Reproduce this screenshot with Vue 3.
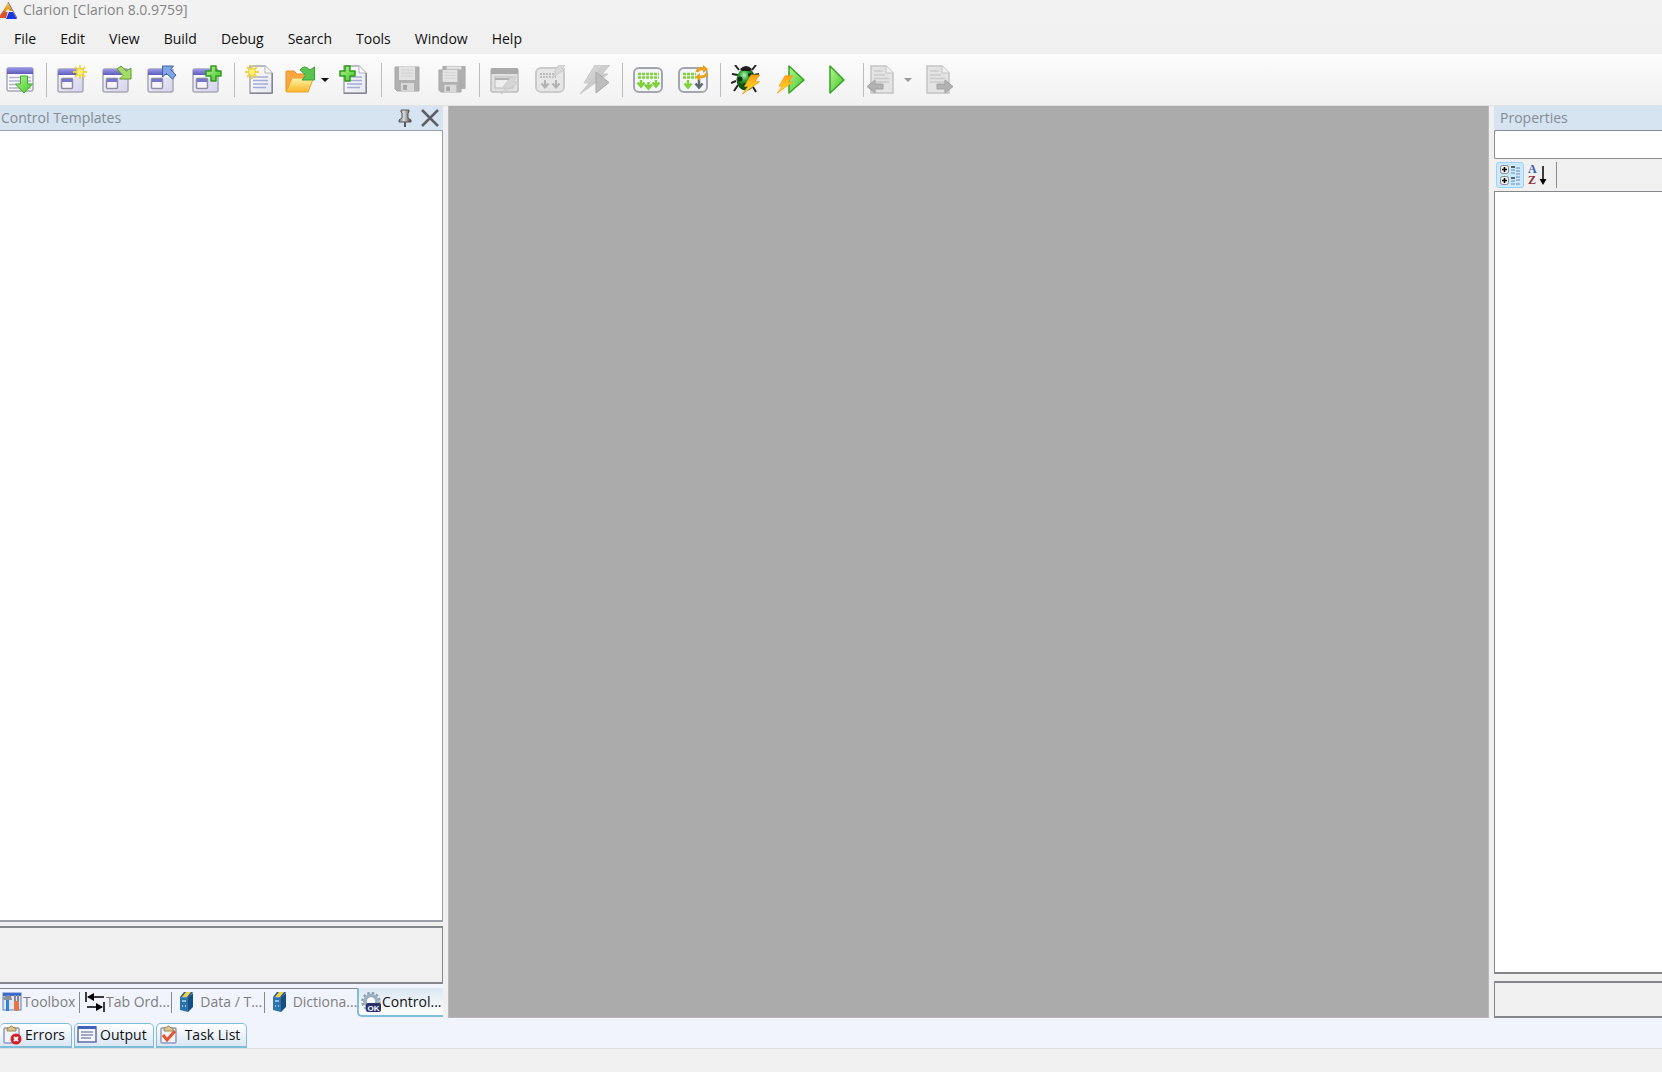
<script setup>
const menus = ['File', 'Edit', 'View', 'Build', 'Debug', 'Search', 'Tools', 'Window', 'Help']

const tools = [
  { id: 'pick', label: 'Application pick list' },
  { sep: true },
  { id: 'win-new', label: 'New solution' },
  { id: 'win-open', label: 'Open solution' },
  { id: 'win-import', label: 'Import solution' },
  { id: 'win-add', label: 'Add project' },
  { sep: true },
  { id: 'file-new', label: 'New file' },
  { id: 'folder', label: 'Open file', caret: true },
  { id: 'file-add', label: 'Add file' },
  { sep: true },
  { id: 'save', label: 'Save', disabled: true },
  { id: 'save-all', label: 'Save all', disabled: true },
  { sep: true },
  { id: 'win-gen', label: 'Generate window', disabled: true },
  { id: 'grid-gen', label: 'Generate all', disabled: true },
  { id: 'gen-run', label: 'Generate and run', disabled: true },
  { sep: true },
  { id: 'build', label: 'Build solution' },
  { id: 'rebuild', label: 'Rebuild solution' },
  { sep: true },
  { id: 'bug', label: 'Debug' },
  { id: 'bolt-run', label: 'Build and run' },
  { id: 'run', label: 'Run' },
  { sep: true },
  { id: 'back', label: 'Navigate back', disabled: true, caret: true, slim: true },
  { id: 'forward', label: 'Navigate forward', disabled: true },
]

const padTabs = [
  { id: 'toolbox', label: 'Toolbox' },
  { id: 'taborder', label: 'Tab Ord...', inset: true },
  { id: 'book', label: 'Data / T...', roomy: true },
  { id: 'book', label: 'Dictiona...', roomy: true },
  { id: 'gear', label: 'Control...', active: true },
]

const dockTabs = [
  { id: 'errors', label: 'Errors' },
  { id: 'output', label: 'Output' },
  { id: 'tasks', label: 'Task List', roomy: true },
]
</script>

<template>
  <div class="shell">
    <svg class="defs" aria-hidden="true">
      <defs>
        <linearGradient id="gBlue" x2="0" y2="1"><stop offset="0" stop-color="#9c99ea" /><stop offset="1" stop-color="#5d5bb8" /></linearGradient>
        <linearGradient id="gPane" x2="1" y2="1"><stop offset="0" stop-color="#f7f7ff" /><stop offset="1" stop-color="#d4d2ee" /></linearGradient>
        <linearGradient id="gGreen" x2="1" y2="1"><stop offset="0" stop-color="#b8f29b" /><stop offset="1" stop-color="#3fc81e" /></linearGradient>
        <linearGradient id="gPaper" x2="1" y2="1"><stop offset="0" stop-color="#ffffff" /><stop offset="1" stop-color="#e4e6ee" /></linearGradient>
        <linearGradient id="gFold" x2="0" y2="1"><stop offset="0" stop-color="#fff3a6" /><stop offset="1" stop-color="#f9b72c" /></linearGradient>
        <linearGradient id="gBolt" x2="0" y2="1"><stop offset="0" stop-color="#ffa012" /><stop offset="1" stop-color="#ffe52e" /></linearGradient>
        <linearGradient id="gGrey" x2="1" y2="1"><stop offset="0" stop-color="#e2e2e2" /><stop offset="1" stop-color="#b4b4b4" /></linearGradient>
        <linearGradient id="gPin"><stop offset="0" stop-color="#777" /><stop offset=".4" stop-color="#ddd" /><stop offset="1" stop-color="#444" /></linearGradient>
        <radialGradient id="gBug" cx=".4" cy=".3"><stop offset="0" stop-color="#b5f2b5" /><stop offset=".5" stop-color="#2fa53a" /><stop offset="1" stop-color="#07520f" /></radialGradient>
        <linearGradient id="gLogo" x2="0" y2="1"><stop offset="0" stop-color="#ffd15a" /><stop offset="1" stop-color="#e08a10" /></linearGradient>
      </defs>

      <symbol id="win" viewBox="0 0 30 30">
        <rect x="1" y="4" width="25" height="23" rx="2" fill="url(#gPane)" stroke="#a8a8b4" stroke-width="1.5" />
        <path d="M1 10V6Q1 4 3 4H24Q26 4 26 6V10Z" fill="url(#gBlue)" />
        <rect x="2" y="10" width="23" height="2" fill="#fff" />
        <rect x="4.500" y="13.500" width="11" height="10" rx="1" fill="#f6f5ff" stroke="#8e8ea0" stroke-width="1.500" />
        <rect x="5" y="14" width="10" height="3" fill="#7875cd" />
      </symbol>
      <symbol id="star" viewBox="0 0 14 14">
        <path d="M7 0V14M0 7H14M2 2L12 12M12 2L2 12" stroke="#f4d43c" stroke-width="1.800" />
        <circle cx="7" cy="7" r="3.500" fill="#fff176" stroke="#efcb35" />
      </symbol>
      <symbol id="plus" viewBox="0 0 17 17">
        <path d="M6 1H11V6H16V11H11V16H6V11H1V6H6Z" fill="url(#gGreen)" stroke="#2f9a1c" stroke-width="1.500" stroke-linejoin="round" />
      </symbol>
      <symbol id="sheet" viewBox="0 0 24 29">
        <path d="M1 1H16L23 8V28H1Z" fill="url(#gPaper)" stroke="#a6a8b0" stroke-width="1.500" />
        <path d="M16 1V8H23" fill="#fff" stroke="#b0b2ba" />
        <path d="M4 12H19M4 15.500H19M4 19H19M4 22.500H17" stroke="#a3acd6" stroke-width="1.300" />
        <path d="M23.300 8V28.300H1" fill="none" stroke="#777984" />
      </symbol>
      <symbol id="greysheet" viewBox="0 0 24 29">
        <path d="M1 1H16L23 8V28H1Z" fill="#e3e3e3" stroke="#c3c3c3" stroke-width="1.500" />
        <path d="M16 1V8H23" fill="#f0f0f0" stroke="#c3c3c3" />
        <path d="M4 6H13M4 10H15M4 13.500H19M4 17H19" stroke="#cacaca" stroke-width="1.300" />
      </symbol>
      <symbol id="bolt" viewBox="0 0 20 22">
        <path d="M10 1L19 1L14 8H19L1 21L7 13H3Z" fill="url(#gBolt)" stroke="#f09a14" stroke-width=".8" stroke-linejoin="round" />
      </symbol>

      <symbol id="pick" viewBox="0 0 30 30">
        <rect x="3" y="3" width="26" height="23" rx="2" fill="#fafaff" stroke="#a8a8b4" stroke-width="1.500" />
        <path d="M3 9V4Q3 2.500 4.500 2.500H27.500Q29 2.500 29 4V9Z" fill="url(#gBlue)" />
        <path d="M5 12.500H27M5 16H27M5 19.500H27M5 23H27" stroke="#b3b3ce" stroke-width="1.300" />
        <path d="M16.500 11H23.500V19H28.500L20 28L11.500 19H16.500Z" fill="url(#gGreen)" stroke="#3fae2a" stroke-linejoin="round" />
      </symbol>
      <symbol id="win-new" viewBox="0 0 30 30"><use href="#win" /><use href="#star" x="16" width="14" height="14" /></symbol>
      <symbol id="win-open" viewBox="0 0 30 30">
        <use href="#win" />
        <path d="M15 4L19 1L24.500 6L29 3V14H17.500L21 10.500Z" fill="#a4dc66" stroke="#609c34" stroke-linejoin="round" />
      </symbol>
      <symbol id="win-import" viewBox="0 0 30 30">
        <use href="#win" />
        <path d="M15.500 1H26.500L23.500 4.500L29 10L25.500 14L19.500 8.500L15.500 12Z" fill="#7fa6e2" stroke="#3b64ad" stroke-linejoin="round" />
      </symbol>
      <symbol id="win-add" viewBox="0 0 30 30"><use href="#win" /><use href="#plus" x="13" width="17" height="17" /></symbol>
      <symbol id="file-new" viewBox="0 0 30 30"><use href="#sheet" x="4" width="24" height="29" /><use href="#star" width="14" height="14" /></symbol>
      <symbol id="folder" viewBox="0 0 30 30">
        <path d="M1 26V7Q1 6 2 6H9L12 9H23V13" fill="#f8a640" stroke="#e98f2b" />
        <path d="M1 27L7 13H28.500L23 27Z" fill="url(#gFold)" stroke="#eda12b" stroke-linejoin="round" />
        <path d="M15 5Q19 -1 25 5L29.500 2V15H17L20.500 10.500Q18 7 15 5Z" fill="#5cc552" stroke="#3ba23a" stroke-linejoin="round" />
      </symbol>
      <symbol id="file-add" viewBox="0 0 30 30"><use href="#sheet" x="4" width="24" height="29" /><use href="#plus" width="17" height="17" /></symbol>
      <symbol id="floppy" viewBox="0 0 26 26">
        <path d="M1 1H25V25H3L1 23Z" fill="#b0b0b0" stroke="#a8a8a8" />
        <rect x="5" y="1" width="16" height="13" fill="#e3e3e3" />
        <path d="M7 4H19M7 7H19M7 10H19" stroke="#d0d0d0" />
        <rect x="7" y="17" width="13" height="8" fill="#d9d9d9" />
        <rect x="9" y="19" width="4" height="5" fill="#a6a6a6" />
      </symbol>
      <symbol id="save" viewBox="0 0 30 30"><use href="#floppy" x="2" y="1" width="26" height="26" /></symbol>
      <symbol id="save-all" viewBox="0 0 30 30"><use href="#floppy" x="5" width="24" height="25" /><use href="#floppy" x="1" y="3" width="24" height="26" /></symbol>
      <symbol id="win-gen" viewBox="0 0 30 30">
        <rect x="1" y="4" width="27" height="23" rx="2" fill="#e0e0e0" stroke="#bdbdbd" stroke-width="1.500" />
        <path d="M1 9V4Q1 3 2 3H27Q28 3 28 4V9Z" fill="#aaa" />
        <rect x="5" y="12" width="18" height="11" fill="#eee" stroke="#bababa" />
        <path d="M5 14H20" stroke="#b2b2b2" stroke-width="2" />
        <path d="M21 12H26L23 17H29L11 29L17 22H13Z" fill="#d6d6d6" stroke="#cacaca" />
      </symbol>
      <symbol id="grid-gen" viewBox="0 0 30 30">
        <rect x="1" y="3" width="28" height="24" rx="5" fill="#e6e6e6" stroke="#cacaca" stroke-width="2" />
        <path d="M5 9H21M5 12H21" stroke="#bdbdbd" stroke-width="2" stroke-dasharray="2 1" />
        <path d="M10 15V22M6.500 18.500L10 22.500L13.500 18.500M21 15V22M17.500 18.500L21 22.500L24.500 18.500" fill="none" stroke="#b2b2b2" stroke-width="2" />
        <path d="M24 0H30L27 4H30L17 13L21 7H19Z" fill="#d9d9d9" stroke="#cacaca" />
      </symbol>
      <symbol id="gen-run" viewBox="0 0 30 30">
        <path d="M15 0H30L22 9H28L0 29L9 18H4Z" fill="url(#gGrey)" stroke="#c9c9c9" />
        <path d="M16 7L29 17.500L16 28Z" fill="#bdbdbd" stroke="#aaa" />
      </symbol>
      <symbol id="build" viewBox="0 0 30 30">
        <rect x="1" y="3" width="28" height="24" rx="5" fill="#f4f5f8" stroke="#a3a6ae" stroke-width="2" />
        <path d="M5 9H26M5 12.500H26" stroke="#7fd13a" stroke-width="2.500" stroke-dasharray="3 1" />
        <path d="M8 15V21M4.500 17.500L8 21.500L11.500 17.500M15.500 17V23M12 19.500L15.500 23.500L19 19.500M23 15V21M19.500 17.500L23 21.500L26.500 17.500" fill="none" stroke="#7fd13a" stroke-width="2.500" />
      </symbol>
      <symbol id="rebuild" viewBox="0 0 30 30">
        <rect x="1" y="3" width="28" height="24" rx="5" fill="#f4f5f8" stroke="#a3a6ae" stroke-width="2" />
        <path d="M5 9H18M5 12.500H18" stroke="#7fd13a" stroke-width="2.500" stroke-dasharray="3 1" />
        <path d="M10 15V22M6.500 18.500L10 22.500L13.500 18.500" fill="none" stroke="#7fd13a" stroke-width="2.500" />
        <path d="M21 14V22M17.500 18.500L21 22.500L24.500 18.500" fill="none" stroke="#5d6b74" stroke-width="2.500" />
        <path d="M19 7Q20 3 26 4M29 8Q28 12 21 12" fill="none" stroke="#e9a21a" stroke-width="3" />
        <path d="M25 0L30 4L25 8ZM22 8L17 12L22 16Z" fill="#e9a21a" />
      </symbol>
      <symbol id="bug" viewBox="0 0 30 30">
        <path d="M4 0L8 5M25 0L21 5M7 10L1 9M5 16L0 18M7 20L3 26M23 10L28 9M22 22L25 27" stroke="#222" stroke-width="2" />
        <ellipse cx="15" cy="14.500" rx="9.500" ry="11" fill="url(#gBug)" />
        <path d="M9 4Q15 -2 21 4L19 6H11Z" fill="#1c1c1c" />
        <circle cx="9" cy="14" r="2.500" fill="#0b2e0d" /><circle cx="19" cy="10" r="2" fill="#0b2e0d" /><circle cx="14" cy="20" r="2" fill="#0b2e0d" />
        <use href="#bolt" x="10" y="9" width="20" height="21" />
      </symbol>
      <symbol id="bolt-run" viewBox="0 0 30 30">
        <path d="M13 1L28 15L13 28Z" fill="url(#gGreen)" stroke="#35a520" stroke-width="1.500" stroke-linejoin="round" />
        <use href="#bolt" y="10" width="18" height="19" />
      </symbol>
      <symbol id="run" viewBox="0 0 30 30">
        <path d="M9 1L23 15L9 28Z" fill="url(#gGreen)" stroke="#35a520" stroke-width="1.500" stroke-linejoin="round" />
      </symbol>
      <symbol id="back" viewBox="0 0 30 30">
        <use href="#greysheet" x="3" width="24" height="29" />
        <path d="M0 21.500L8 15V19H16V24H8V28Z" fill="#b2b2b2" stroke="#a2a2a2" />
      </symbol>
      <symbol id="forward" viewBox="0 0 30 30">
        <use href="#greysheet" x="1" width="24" height="29" />
        <path d="M28 21.500L20 15V19H12V24H20V28Z" fill="#b2b2b2" stroke="#a2a2a2" />
      </symbol>

      <symbol id="toolbox" viewBox="0 0 20 20">
        <rect x="1" y="1" width="18" height="17" fill="#dfe7f7" stroke="#5b7cc0" /><rect x="1" y="1" width="18" height="3" fill="#3a6bd0" />
        <path d="M1 6Q4 2 9 4L10 8H2Z" fill="#8d9096" /><rect x="4" y="8" width="3" height="11" fill="#3a80cc" />
        <path d="M13 3V10M16 3V10" stroke="#888" stroke-width="2" /><rect x="12" y="9" width="5" height="10" rx="2" fill="#e8743b" />
      </symbol>
      <symbol id="taborder" viewBox="0 0 20 20">
        <path d="M1 0V10M3 5H19M19 10V20M2 15H17" stroke="#000" stroke-width="1.500" /><path d="M2 5L9 1V9ZM18 15L11 11V19Z" fill="#000" />
      </symbol>
      <symbol id="book" viewBox="0 0 20 20">
        <path d="M3 5L7 0H16L12 6Z" fill="#1f5f98" /><path d="M5 5L9 0H14L10 5Z" fill="#f6d043" /><path d="M11 6L16 1V15L11 20Z" fill="#174f83" /><path d="M3 5L11 6V20L3 18Z" fill="#2d74ae" />
        <path d="M5 9H9M5 14H6M8 14H9" stroke="#b9d5ec" stroke-width="1.500" />
      </symbol>
      <symbol id="gear" viewBox="0 0 20 20">
        <circle cx="10" cy="9.500" r="8.500" fill="none" stroke="#8da0b3" stroke-width="2.500" stroke-dasharray="2.500 2" />
        <circle cx="10" cy="9.500" r="6" fill="#fff" stroke="#9db0c2" stroke-width="3.500" />
        <rect x="5" y="11" width="15" height="9" rx="2" fill="#28326b" />
        <text x="12.500" y="18.500" text-anchor="middle" font-family="Liberation Sans, sans-serif" font-weight="bold" font-size="8" fill="#fff">OK</text>
      </symbol>
      <symbol id="clip" viewBox="0 0 20 20">
        <rect x="2" y="3" width="15" height="15" rx="1" fill="#f0f3fa" stroke="#8f9ab8" stroke-width="1.500" />
        <path d="M5 6V3H7Q9 -1 12 3H14V6Z" fill="#dcc68a" stroke="#9b8754" />
      </symbol>
      <symbol id="errors" viewBox="0 0 20 20">
        <use href="#clip" /><circle cx="14" cy="14" r="5.500" fill="#cf1f27" /><path d="M12 12L16 16M16 12L12 16" stroke="#fff" stroke-width="1.800" />
      </symbol>
      <symbol id="output" viewBox="0 0 20 20">
        <rect x="1" y="2" width="18" height="15" fill="#f6f8fd" stroke="#5b6ca8" stroke-width="1.500" /><rect x="1" y="1" width="18" height="3" fill="#3f62c0" />
        <path d="M4 7H16M4 10H16M4 13H14" stroke="#8490b5" stroke-width="1.300" />
      </symbol>
      <symbol id="tasks" viewBox="0 0 20 20"><use href="#clip" /><path d="M4 10L8 15L16 6" fill="none" stroke="#e5522c" stroke-width="3" /></symbol>
    </svg>

    <header class="title">
      <svg class="logo" viewBox="0 0 18 18" aria-hidden="true">
        <path d="M8 1L13 10H3Z" fill="url(#gLogo)" /><path d="M3 10H8L6 17H-2Z" fill="#d9532c" /><path d="M9 11H13L17 18H6Z" fill="#1b35e0" />
        <path d="M8 1L17 17" stroke="#777" stroke-width="1" /><path d="M5 11L8 8L11 11Z" fill="#f6eee2" />
      </svg>
      <span>Clarion [Clarion 8.0.9759]</span>
    </header>

    <nav class="menu" aria-label="Main menu">
      <button v-for="m in menus" :key="m" type="button">{{ m }}</button>
    </nav>

    <div class="tools" role="toolbar" aria-label="Main toolbar">
      <template v-for="(t, i) in tools" :key="i">
        <span v-if="t.sep" class="sep"></span>
        <template v-else>
          <button type="button" class="tool" :class="{ split: t.caret, slim: t.slim }" :aria-label="t.label" :disabled="t.disabled">
            <svg width="30" height="30"><use :href="'#' + t.id" /></svg>
          </button>
          <button v-if="t.caret" type="button" class="caret" :class="{ wide: t.slim }" :aria-label="t.label + ' options'" :disabled="t.disabled"></button>
        </template>
      </template>
    </div>

    <div class="work">
      <aside class="left">
        <div class="head">
          <h2>Control Templates</h2>
          <button type="button" aria-label="Auto hide">
            <svg width="16" height="18" viewBox="0 0 16 18"><path d="M4 1H12V3L11 4V9L14 11V13H2V11L5 9V4L4 3Z" fill="url(#gPin)" stroke="#555" /><path d="M8 13V18" stroke="#555" stroke-width="2" /></svg>
          </button>
          <button type="button" aria-label="Close">
            <svg width="18" height="18" viewBox="0 0 18 18"><path d="M1 1L17 17M17 1L1 17" stroke="#5c6064" stroke-width="2.500" /></svg>
          </button>
        </div>
        <div class="list"></div>
        <div class="note"></div>
        <div class="pads" role="tablist" aria-label="Pads">
          <button v-for="(t, i) in padTabs" :key="i" type="button" role="tab" :aria-selected="!!t.active" :class="{ active: t.active, roomy: t.roomy, inset: t.inset }">
            <svg width="20" height="20"><use :href="'#' + t.id" /></svg>
            <span>{{ t.label }}</span>
          </button>
        </div>
      </aside>

      <main class="canvas"></main>

      <aside class="right">
        <div class="head"><h2>Properties</h2></div>
        <select class="object" aria-label="Selected object"></select>
        <div class="sorts">
          <button type="button" class="on" aria-label="Categorized">
            <svg width="22" height="22" viewBox="0 0 22 22">
              <g fill="#f1eee4" stroke="#7f8b99"><rect x="1.500" y="1.500" width="8" height="8" rx="2" /><rect x="1.500" y="12.500" width="8" height="8" rx="2" /></g>
              <path d="M3 5.500H8M5.500 3V8M3 16.500H8M5.500 14V19" stroke="#000" stroke-width="1.500" />
              <path d="M12 3H16M12 14H16" stroke="#333" stroke-width="1.500" /><path d="M12 6H16M12 9H16M12 17H16M12 20H16M17 4H21M17 7H21M17 10H21M17 13H21M17 16H21M17 20H21" stroke="#6a89a8" />
            </svg>
          </button>
          <button type="button" aria-label="Alphabetical">
            <svg width="22" height="22" viewBox="0 0 22 22">
              <text x="1" y="9" font-family="Liberation Serif, serif" font-weight="bold" font-size="12" fill="#3559b5">A</text>
              <text x="1" y="20" font-family="Liberation Serif, serif" font-weight="bold" font-size="12" fill="#923038">Z</text>
              <path d="M16 2V17" stroke="#000" stroke-width="1.500" /><path d="M12.500 15H19.500L16 21Z" fill="#000" />
            </svg>
          </button>
          <span class="rule"></span>
        </div>
        <div class="grid"></div>
        <div class="help"></div>
      </aside>
    </div>

    <div class="dock">
      <button v-for="t in dockTabs" :key="t.id" type="button" :class="{ roomy: t.roomy }">
        <svg width="20" height="20"><use :href="'#' + t.id" /></svg>
        <span>{{ t.label }}</span>
      </button>
    </div>
    <footer class="status"></footer>
  </div>
</template>

<style>
body { margin: 0; }
</style>

<style scoped>
* { box-sizing: border-box; }
.shell {
  display: flex; flex-direction: column; height: 100vh; overflow: hidden;
  background: #f0f0f0; color: #111;
  font-family: "Open Sans", "Noto Sans", sans-serif; font-size: 14px; line-height: 20px;
}
.defs { position: absolute; width: 0; height: 0; }
button { flex: none; margin: 0; padding: 0; border: 0; background: none; font: inherit; color: inherit; }
svg { display: block; flex: none; }

.title { display: flex; align-items: center; height: 24px; padding-bottom: 4px; gap: 5px; background: #f2f2f2; color: #858585; white-space: nowrap; }
.logo { width: 18px; height: 18px; }

.menu { display: flex; height: 30px; padding: 0 2px; background: #f0f0f0; }
.menu button { padding: 0 12px; }

.tools { display: flex; align-items: center; height: 52px; margin-left: -3px; background: linear-gradient(#fcfcfc, #f1f1f1); border-bottom: 1px solid #e2e2e2; }
.tool { width: 45px; padding-left: 7px; }
.tool.split { width: 34px; padding-left: 2px; }
.tool.slim { width: 31px; padding-left: 0; }
.caret { display: flex; width: 15px; height: 30px; align-items: center; justify-content: center; }
.caret.wide { width: 20px; }
.caret::before { content: ""; border: 4px solid transparent; border-top-color: #111; border-bottom: 0; }
.caret:disabled::before { border-top-color: #999; }
.sep { flex: none; width: 1px; height: 34px; margin: 0 3px 0 4px; background: #bdbdbd; }

.work { display: flex; flex: 1; min-height: 0; gap: 5px; }
.left { display: flex; flex-direction: column; flex: 0 0 443px; }
.head { display: flex; flex: none; align-items: center; height: 24px; padding: 0 4px 0 1px; gap: 8px; background: #d6e3f1; color: #858b92; }
.head h2 { flex: 1; margin: 0; font-size: 14px; font-weight: 400; white-space: nowrap; }
.list { flex: 1; background: #fff; border: 1px solid #9a9ea6; border-width: 1px 1px 2px 0; }
.note { height: 58px; margin-top: 4px; border: 1px solid #85878b; border-width: 2px 1px 2px 0; }
.pads { display: flex; height: 34px; padding: 4px 0 1px; background: #f1f4fd; color: #7e7e7e; }
.pads button { display: flex; align-items: center; flex: 1 1 0; padding: 0 1px 2px 2px; gap: 1px; border-top: 1px solid #888; position: relative; white-space: nowrap; overflow: hidden; }
.pads button:not(.active):not(:nth-child(4))::after { content: ""; position: absolute; right: 0; top: 3px; height: 21px; width: 1px; background: #888; }
.pads .roomy { padding-left: 5px; gap: 3px; }
.pads .inset { padding-left: 5px; }
.pads button:first-child { flex: 0 0 80px; }
.pads .active { flex: 0 0 86px; color: #111; padding: 0 0 0 2px; background: linear-gradient(#dbe7f3, #fff); border: solid #83bed8; border-width: 0 0 2px 2px; border-radius: 0 0 0 5px; }

.canvas { flex: 1; min-width: 0; background: #ababab; border: 1px solid #b9b9b9; border-top: 0; }

.right { display: flex; flex-direction: column; flex: 0 0 168px; }
.right .head { padding-left: 6px; }
.object { height: 29px; margin: 0; appearance: none; background: #fff; border: 1px solid #8b8d91; border-right: 0; border-radius: 2px 0 0 2px; }
.sorts { display: flex; align-items: center; height: 32px; padding: 0 2px 1px; }
.sorts button { display: flex; align-items: center; justify-content: center; width: 28px; height: 26px; border: 1px solid transparent; border-radius: 3px; }
.sorts .on { background: #cce8ff; border-color: #99d1ff; }
.rule { width: 1px; height: 26px; margin-left: 4px; background: #8c8c8c; }
.grid { flex: 1; background: #fff; border: 1px solid #85878b; border-width: 1px 0 2px 1px; }
.help { height: 37px; margin-top: 7px; border: 1px solid #85878b; border-width: 2px 0 2px 1px; }

.dock { display: flex; align-items: flex-end; height: 31px; gap: 2px; background: #f1f4fd; border-bottom: 1px solid #dcdedf; }
.dock button { display: flex; align-items: center; height: 25px; padding: 0 6px 0 2px; gap: 3px; border: 1px solid #7dbdd9; border-bottom-width: 2px; border-radius: 5px 5px 0 0; background: linear-gradient(#fff, #dbe7f3); }
.dock button:first-child { border-left: 0; }
.dock .roomy { gap: 6px; }
.status { height: 23px; background: #f0f0f0; }
</style>
